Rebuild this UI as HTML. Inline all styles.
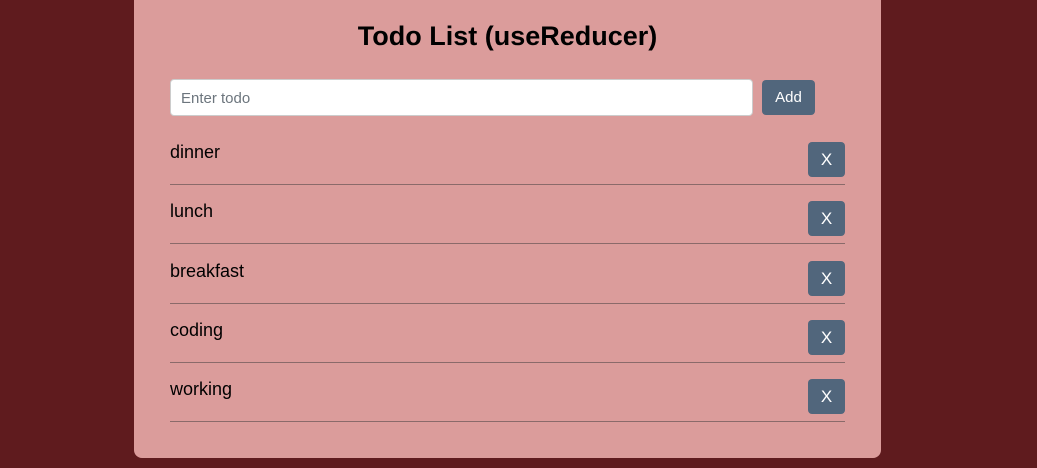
<!DOCTYPE html>
<html><head><style>
body{margin:0;width:1037px;height:468px;background:#5f1b1e;font-family:"Liberation Sans",Arial,sans-serif;position:relative;overflow:hidden}
.card{position:absolute;left:134px;top:-10px;width:747px;height:468px;background:#db9c9b;border-radius:8px}
h1{position:absolute;left:134px;width:747px;top:21px;margin:0;text-align:center;font-size:27px;font-weight:bold;color:#000;line-height:30px}
.inp{position:absolute;left:170px;top:79px;width:581px;height:35px;background:#fff;border:1px solid #ccc;border-radius:4px;box-sizing:content-box}
.inp span{position:absolute;left:10px;top:10px;font-size:15px;color:#6c757d}
.btn{position:absolute;background:#51667c;color:#fff;border-radius:4px;text-align:center}
.add{left:762px;top:80px;width:53px;height:35px;line-height:36px;font-size:15px}
.row{position:absolute;left:170px;width:675px;height:59px;border-bottom:1px solid #8a6a6a}
.row span{position:absolute;left:0;top:17px;font-size:18px;color:#000;line-height:20px}
.row .btn{left:638px;top:17px;width:37px;height:35px;line-height:35px;font-size:17px}
</style></head><body>
<div class="card"></div>
<h1>Todo List (useReducer)</h1>
<div class="inp"><span>Enter todo</span></div>
<div class="btn add">Add</div>
<div class="row" style="top:125px"><span>dinner</span><div class="btn">X</div></div>
<div class="row" style="top:184px"><span>lunch</span><div class="btn">X</div></div>
<div class="row" style="top:244px"><span>breakfast</span><div class="btn">X</div></div>
<div class="row" style="top:303px"><span>coding</span><div class="btn">X</div></div>
<div class="row" style="top:362px"><span>working</span><div class="btn">X</div></div>
</body></html>
